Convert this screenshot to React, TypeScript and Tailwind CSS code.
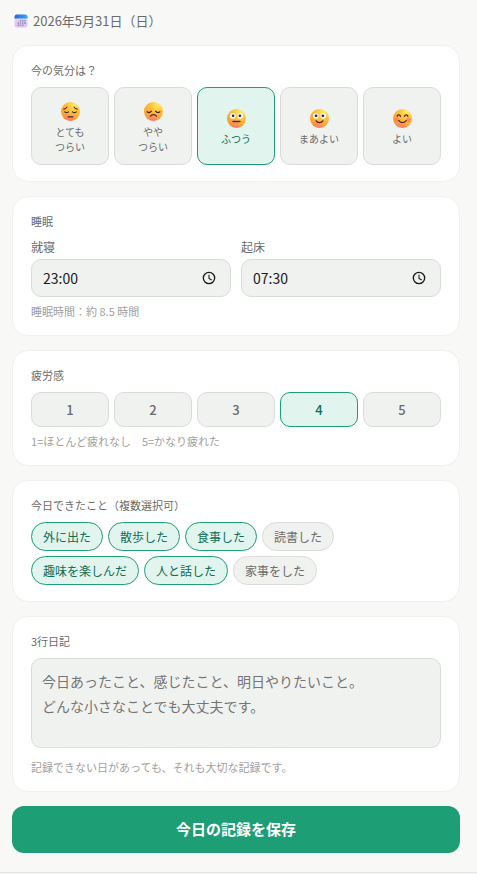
import { useState } from "react";
import type { ReactNode } from "react";

const moods = [
  { id: "very-hard", lines: ["とても", "つらい"] },
  { id: "hard", lines: ["やや", "つらい"] },
  { id: "normal", lines: ["ふつう"] },
  { id: "fair", lines: ["まあよい"] },
  { id: "good", lines: ["よい"] },
];

const activities = [
  "外に出た",
  "散歩した",
  "食事した",
  "読書した",
  "趣味を楽しんだ",
  "人と話した",
  "家事をした",
];

const on = "border-[#1d9e75] bg-[#e1f4ed] text-[#0f6e56]";
const off = "border-[#d9dcd9] bg-[#f0f2f0] text-[#6b6b6b]";

const CalendarIcon = () => (
  <svg viewBox="0 0 28 28" className="size-3.5" aria-hidden="true">
    <defs>
      <linearGradient id="cal-page" x1="0" y1="0" x2="0" y2="1">
        <stop offset="0" stopColor="#e6e0f2" />
        <stop offset="1" stopColor="#dcc3ee" />
      </linearGradient>
      <linearGradient id="cal-top" x1="0" y1="0" x2="1" y2="0">
        <stop offset="0" stopColor="#2a63dc" />
        <stop offset="1" stopColor="#33a9ff" />
      </linearGradient>
    </defs>
    <rect x="1" y="1" width="26" height="26" rx="5" fill="url(#cal-page)" />
    <path d="M1 9V6a5 5 0 0 1 5-5h16a5 5 0 0 1 5 5v3z" fill="url(#cal-top)" />
    <g fill="#9a8cb8">
      <rect x="11.5" y="12" width="3" height="3" />
      <rect x="16" y="12" width="3" height="3" />
      <rect x="20.5" y="12" width="3" height="3" />
      <rect x="7" y="16.5" width="3" height="3" />
      <rect x="11.5" y="16.5" width="3" height="3" />
      <rect x="16" y="16.5" width="3" height="3" />
      <rect x="7" y="21" width="3" height="3" />
      <rect x="11.5" y="21" width="3" height="3" />
      <rect x="16" y="21" width="3" height="3" />
    </g>
    <rect x="20.5" y="16.5" width="3" height="3" fill="#3b82f6" />
  </svg>
);

const ClockIcon = () => (
  <svg
    viewBox="0 0 24 24"
    className="size-4 shrink-0"
    fill="none"
    stroke="#1a1a1a"
    strokeWidth="2"
    aria-hidden="true"
  >
    <circle cx="12" cy="12" r="8.5" />
    <path d="M12 7v5.500l4 2.500" strokeWidth="1.6" />
  </svg>
);

const features: Record<string, ReactNode> = {
  "very-hard": (
    <>
      <path d="M4 10.5c2 0 3.8-1.2 4.8-3.2M19.200 7.300c1 2 2.800 3.200 4.800 3.200" strokeWidth="1.5" />
      <path d="M5.500 14.500c1.500 1.400 4 1.400 5.500 0M17 14.500c1.500 1.400 4 1.400 5.500 0" />
      <path d="M10.500 22h7" />
    </>
  ),
  hard: (
    <>
      <path d="M4.500 14.500c2 1.400 4.800 1.200 6.500-1M17 13.500c1.700 2.200 4.500 2.400 6.500 1" />
      <path d="M9.500 21c1.800-3 7.200-3 9 0" />
    </>
  ),
  normal: <path d="M9 18.500h10" strokeWidth="2.4" />,
  fair: <path d="M9 17.500c2 3.300 8 3.300 10 0" />,
  good: (
    <>
      <path d="M6 11c.6-3.200 4.400-3.200 5 0M17 11c.6-3.200 4.400-3.200 5 0" />
      <path d="M8.500 17c2.200 4 8.800 4 11 0" />
    </>
  ),
};

const Face = ({ id }: { id: string }) => (
  <svg viewBox="0 0 28 28" className="my-[3px] size-[19px]" aria-hidden="true">
    <defs>
      <radialGradient id={`face-${id}`} cx="0.72" cy="0.15" r="0.95">
        <stop offset="0" stopColor="#ffec5c" />
        <stop offset="0.45" stopColor="#ffbd38" />
        <stop offset="1" stopColor="#f79436" />
      </radialGradient>
      <radialGradient id={`glow-${id}`} cx="0.4" cy="1.1" r="0.5">
        <stop offset="0" stopColor="#ff5da0" stopOpacity="0.8" />
        <stop offset="1" stopColor="#ff6f8a" stopOpacity="0" />
      </radialGradient>
    </defs>
    <circle cx="14" cy="14" r="14" fill={`url(#face-${id})`} />
    <circle cx="14" cy="14" r="14" fill={`url(#glow-${id})`} />
    {id === "good" && (
      <g fill="#ff5f6d" opacity="0.5">
        <circle cx="5.5" cy="16" r="3.5" />
        <circle cx="22.5" cy="16" r="3.5" />
      </g>
    )}
    {(id === "normal" || id === "fair") && (
      <>
        <g fill="#fff">
          <circle cx="8.5" cy="10" r="4.2" />
          <circle cx="19.5" cy="10" r="4.2" />
        </g>
        <g fill="#3b2438">
          <circle cx="9" cy="10" r="2" />
          <circle cx="19" cy="10" r="2" />
        </g>
      </>
    )}
    <g fill="none" stroke="#4a2432" strokeWidth="1.8" strokeLinecap="round">
      {features[id]}
    </g>
  </svg>
);

const Card = ({ title, children }: { title: string; children: ReactNode }) => (
  <section className="rounded-2xl border border-[#f0f1ef] bg-white px-[18px] py-4">
    <h2 className="mb-2 text-[11px] leading-[17px] text-[#6b6b6b]">{title}</h2>
    {children}
  </section>
);

const Hint = ({ children }: { children: ReactNode }) => (
  <p className="mt-1.5 text-[11px] leading-4 text-[#a0a0a0]">{children}</p>
);

type TimeFieldProps = {
  id: string;
  label: string;
  value: string;
  onChange: (value: string) => void;
};

// plain text field so the 24-hour clock is kept in every locale
const TimeField = ({ id, label, value, onChange }: TimeFieldProps) => (
  <div className="min-w-0 flex-1">
    <label htmlFor={id} className="mb-[3px] block text-xs leading-[18px] text-[#6b6b6b]">
      {label}
    </label>
    <div className="flex h-[38px] items-center rounded-[10px] border border-[#d9dcd9] bg-[#f0f2f0] pr-[13px] pl-[11px]">
      <input
        id={id}
        type="text"
        inputMode="numeric"
        maxLength={5}
        value={value}
        onChange={(e) => onChange(e.target.value)}
        className="min-w-0 flex-1 bg-transparent text-sm text-[#1a1a1a] outline-none"
      />
      <ClockIcon />
    </div>
  </div>
);

const sleepHours = (bed: string, wake: string) => {
  const [bh, bm] = bed.split(":").map(Number);
  const [wh, wm] = wake.split(":").map(Number);
  const minutes = (wh * 60 + wm - bh * 60 - bm + 1440) % 1440;
  return Number.isNaN(minutes) ? "-" : (minutes / 60).toFixed(1);
};

export default function App() {
  const [mood, setMood] = useState("normal");
  const [bed, setBed] = useState("23:00");
  const [wake, setWake] = useState("07:30");
  const [fatigue, setFatigue] = useState(4);
  const [done, setDone] = useState([
    "外に出た",
    "散歩した",
    "食事した",
    "趣味を楽しんだ",
    "人と話した",
  ]);
  const [diary, setDiary] = useState("");

  const toggle = (name: string) =>
    setDone(done.includes(name) ? done.filter((d) => d !== name) : [...done, name]);

  return (
    <div
      lang="ja"
      className="min-h-screen bg-[#f8f8f6] font-['Noto_Sans_CJK_JP',sans-serif]"
    >
      <main className="flex flex-col gap-3.5 border-b border-[#e4e5e3] pt-2.5 pr-[17px] pb-[19px] pl-3">
        <header className="flex items-center gap-[5px] px-0.5 text-[13px] leading-[21px] text-[#6b6b6b]">
          <CalendarIcon />
          <time dateTime="2026-05-31">2026年5月31日（日）</time>
        </header>

        <Card title="今の気分は？">
          <div className="grid grid-cols-5 gap-[5px]">
            {moods.map((m) => (
              <button
                key={m.id}
                type="button"
                aria-pressed={mood === m.id}
                onClick={() => setMood(m.id)}
                className={`flex aspect-square flex-col items-center justify-center rounded-[10px] border text-[10px] leading-[15px] ${
                  mood === m.id ? on : off
                }`}
              >
                <Face id={m.id} />
                {m.lines.map((line) => (
                  <span key={line}>{line}</span>
                ))}
              </button>
            ))}
          </div>
        </Card>

        <Card title="睡眠">
          <div className="flex gap-2.5">
            <TimeField id="bed" label="就寝" value={bed} onChange={setBed} />
            <TimeField id="wake" label="起床" value={wake} onChange={setWake} />
          </div>
          <Hint>睡眠時間：約 {sleepHours(bed, wake)} 時間</Hint>
        </Card>

        <Card title="疲労感">
          <div className="grid grid-cols-5 gap-[5px]">
            {[1, 2, 3, 4, 5].map((n) => (
              <button
                key={n}
                type="button"
                aria-pressed={fatigue === n}
                onClick={() => setFatigue(n)}
                className={`h-[35px] rounded-[10px] border text-[13px] font-medium ${
                  fatigue === n ? on : off
                }`}
              >
                {n}
              </button>
            ))}
          </div>
          <Hint>1=ほとんど疲れなし　5=かなり疲れた</Hint>
        </Card>

        <Card title="今日できたこと（複数選択可）">
          <div className="flex flex-wrap gap-[5px]">
            {activities.map((name) => (
              <button
                key={name}
                type="button"
                aria-pressed={done.includes(name)}
                onClick={() => toggle(name)}
                className={`h-[29px] rounded-full border px-[11px] text-xs ${
                  done.includes(name) ? on : off
                }`}
              >
                {name}
              </button>
            ))}
          </div>
        </Card>

        <Card title="3行日記">
          <textarea
            aria-label="3行日記"
            value={diary}
            onChange={(e) => setDiary(e.target.value)}
            placeholder={"今日あったこと、感じたこと、明日やりたいこと。\nどんな小さなことでも大丈夫です。"}
            className="mb-[11px] block h-[90px] w-full resize-none rounded-[10px] border border-[#d9dcd9] bg-[#f0f2f0] p-2.5 text-sm leading-[25px] text-[#1a1a1a] placeholder:text-[#757575]"
          />
          <Hint>記録できない日があっても、それも大切な記録です。</Hint>
        </Card>

        <button
          type="button"
          className="h-[47px] rounded-xl bg-[#1d9e75] text-[15px] font-bold text-white"
        >
          今日の記録を保存
        </button>
      </main>
    </div>
  );
}
